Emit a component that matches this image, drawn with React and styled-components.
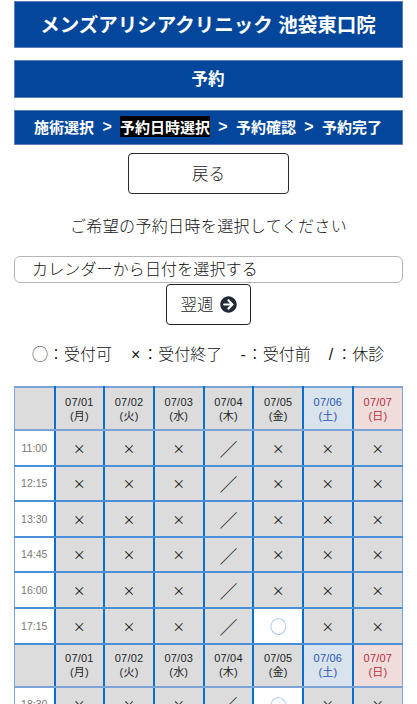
import React from "react";
import styled, { createGlobalStyle } from "styled-components";
import { FaArrowCircleRight } from "react-icons/fa";

const Global = createGlobalStyle`
  html, body { margin: 0; padding: 0; background: #fff; overflow: hidden; height: 704px; }
  body { font-family: "Liberation Sans", "Noto Sans CJK JP", sans-serif; color: #212529; }
  #root { width: 417px; }
`;

const Page = styled.div`
  display: flex;
  flex-direction: column;
  align-items: center;
  padding: 1px 14px 0;
  box-sizing: border-box;
  width: 417px;
`;

const Banner = styled.div`
  width: 389px;
  height: ${(p) => p.$h}px;
  margin-bottom: ${(p) => p.$mb}px;
  padding: 0 1px 2px 0;
  box-sizing: border-box;
  background: #02479c;
  border: 1px solid #5f7fb5;
  color: #fff;
  font-weight: 700;
  font-size: ${(p) => p.$size}px;
  display: flex;
  align-items: center;
  justify-content: center;
  white-space: nowrap;
`;

const Steps = styled(Banner)`
  gap: 7.8px;
`;

const Sep = styled.span`
  font-family: "Liberation Sans", sans-serif;
  font-size: 16px;
  font-weight: 700;
  margin: 0 0.5px;
`;

const Active = styled.span`
  background: #000;
`;

const Back = styled.button`
  width: 161px;
  height: 41px;
  margin-top: 8px;
  background: #fff;
  border: 1px solid #2a2a2a;
  border-radius: 4px;
  font: 300 16.5px "Noto Sans CJK JP", sans-serif;
  color: #222;
  padding: 0 0 2px;
`;

const Lead = styled.p`
  margin: 21px 0 0;
  height: 20px;
  font: 300 16px/20px "Noto Sans CJK JP", sans-serif;
  letter-spacing: 0.35px;
  color: #111;
`;

const DateField = styled.div`
  width: 389px;
  height: 27px;
  margin-top: 21px;
  box-sizing: border-box;
  border: 1px solid #b5b5b5;
  border-radius: 6px;
  padding-left: 17px;
  font: 300 16px/23px "Noto Sans CJK JP", sans-serif;
  letter-spacing: 0.13px;
  color: #111;
`;

const Next = styled.button`
  width: 85px;
  height: 41px;
  margin-top: 1px;
  background: #fff;
  border: 1px solid #222;
  border-radius: 4px;
  font: 300 16.5px "Noto Sans CJK JP", sans-serif;
  color: #222;
  padding: 0 0 2px;
  display: flex;
  align-items: center;
  justify-content: center;
  gap: 6px;
  svg { width: 17px; height: 17px; color: #212a36; margin-top: 2px; }
`;

const Legend = styled.div`
  width: 389px;
  margin-top: 20px;
  height: 20px;
  padding-left: 18px;
  box-sizing: border-box;
  display: flex;
  align-items: center;
  font: 300 16px/20px "Liberation Sans", "Noto Sans CJK JP", sans-serif;
  color: #111;
  white-space: nowrap;
`;

const LegendItem = styled.span`
  margin-right: ${(p) => p.$mr}px;
  display: inline-flex;
  align-items: center;
`;

const Mark = styled.span`
  margin-right: ${(p) => p.$gap}px;
`;

const Grid = styled.table`
  width: 389px;
  margin-top: 21px;
  border-collapse: collapse;
  table-layout: fixed;
  flex: none;
`;

const Cell = styled.td`
  padding: 2px 0 0;
  text-align: center;
  vertical-align: middle;
  background: #dcdcdc;
  border-top: 2px solid #4a90d9;
  border-bottom: 2px solid #4a90d9;
  border-left: 2px solid #0b6fc9;
  border-right: 2px solid #0b6fc9;
  height: 31.6px;
  font-size: 12.5px;
  line-height: 1;
  color: #111;
  font-family: "Noto Sans CJK JP", sans-serif;
  font-weight: 400;
  &:first-child { border-left: 1px solid #7ba3d8; }
  &:last-child { border-right: 1px solid #7ba3d8; }
`;

const SlashCell = styled(Cell)`
  padding: 0;
  height: 33.6px;
  font-size: 18px;
  font-weight: 300;
`;

const OpenCell = styled(Cell)`
  padding: 0;
  height: 33.6px;
  background: #fff;
  color: #6ea8fe;
  font-size: 17px;
  font-weight: 300;
`;

const TimeCell = styled(Cell)`
  padding: 0;
  height: 33.6px;
  background: #fff;
  font-family: "Liberation Sans", sans-serif;
  font-size: 10.5px;
  color: #777;
`;

const HeadCell = styled.th`
  padding: 0;
  height: 41px;
  text-align: center;
  vertical-align: middle;
  font-weight: 400;
  font-size: 11px;
  letter-spacing: 0.2px;
  line-height: 14px;
  font-family: "Liberation Sans", "Noto Sans CJK JP", sans-serif;
  color: ${(p) => p.$fg};
  background: ${(p) => p.$bg};
  border-top: 2px solid #7ba3d8;
  border-bottom: 2px solid #7ba3d8;
  border-left: 2px solid #0b6fc9;
  border-right: 2px solid #0b6fc9;
  &:first-child { border-left: 1px solid #7ba3d8; }
  &:last-child { border-right: 1px solid #7ba3d8; }
`;

const days = [
  ["07/01", "(月)", "#212529", "#dcdcdc"],
  ["07/02", "(火)", "#212529", "#dcdcdc"],
  ["07/03", "(水)", "#212529", "#dcdcdc"],
  ["07/04", "(木)", "#212529", "#dcdcdc"],
  ["07/05", "(金)", "#212529", "#dcdcdc"],
  ["07/06", "(土)", "#2a55b5", "#d8e3ee"],
  ["07/07", "(日)", "#b5303a", "#f0dcdb"],
];

const HeaderRow = () => (
  <tr>
    <HeadCell $fg="#212529" $bg="#dcdcdc" />
    {days.map(([d, w, fg, bg]) => (
      <HeadCell key={d} $fg={fg} $bg={bg}>
        {d}
        <br />
        {w}
      </HeadCell>
    ))}
  </tr>
);

const SlotRow = ({ time, open }) => (
  <tr>
    <TimeCell>{time}</TimeCell>
    {days.map((_, i) =>
      i === 3 ? (
        <SlashCell key={i}>／</SlashCell>
      ) : i === 4 && open ? (
        <OpenCell key={i}>○</OpenCell>
      ) : (
        <Cell key={i}>×</Cell>
      )
    )}
  </tr>
);

export default function App() {
  return (
    <Page>
      <Global />
      <Banner $h={47} $mb={12} $size={19.5}>メンズアリシアクリニック 池袋東口院</Banner>
      <Banner $h={38} $mb={12} $size={16.5}>予約</Banner>
      <Steps $h={35} $mb={0} $size={15}>
        <span>施術選択</span>
        <Sep>&gt;</Sep>
        <Active>予約日時選択</Active>
        <Sep>&gt;</Sep>
        <span>予約確認</span>
        <Sep>&gt;</Sep>
        <span>予約完了</span>
      </Steps>
      <Back>戻る</Back>
      <Lead>ご希望の予約日時を選択してください</Lead>
      <DateField>カレンダーから日付を選択する</DateField>
      <Next>
        翌週 <FaArrowCircleRight />
      </Next>
      <Legend>
        <LegendItem $mr={19}>◯：受付可</LegendItem>
        <LegendItem $mr={18}><Mark $gap={2}>×</Mark>：受付終了</LegendItem>
        <LegendItem $mr={18}><Mark $gap={1}>-</Mark>：受付前</LegendItem>
        <LegendItem $mr={0}><Mark $gap={3}>/</Mark>：休診</LegendItem>
      </Legend>
      <Grid>
        <colgroup>
          <col style={{ width: 40 }} />
        </colgroup>
        <tbody>
          <HeaderRow />
          <SlotRow time="11:00" />
          <SlotRow time="12:15" />
          <SlotRow time="13:30" />
          <SlotRow time="14:45" />
          <SlotRow time="16:00" />
          <SlotRow time="17:15" open />
          <HeaderRow />
          <SlotRow time="18:30" open />
        </tbody>
      </Grid>
    </Page>
  );
}
